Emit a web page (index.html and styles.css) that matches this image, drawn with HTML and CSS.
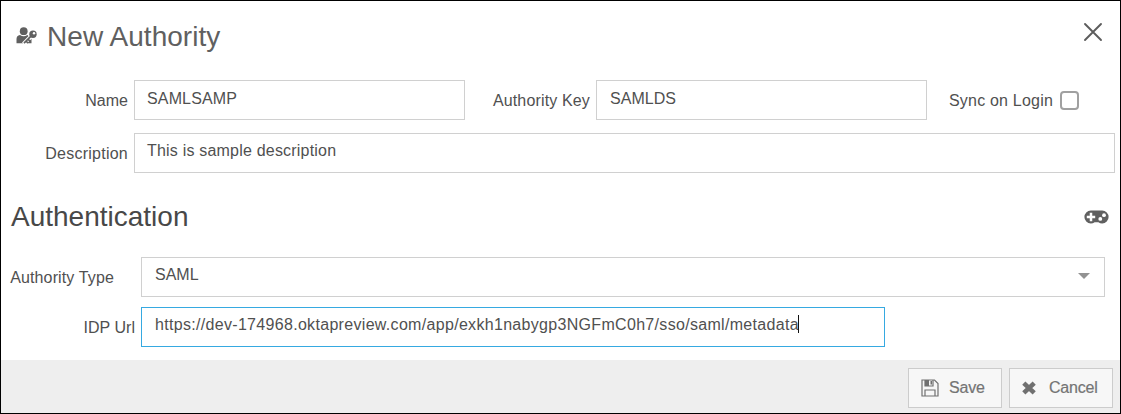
FILE: index.html
```html
<!DOCTYPE html>
<html lang="en">
<head>
<meta charset="utf-8">
<title>New Authority</title>
<link rel="stylesheet" href="styles.css">
</head>
<body>
<main class="dialog">
  <header class="header">
    <svg class="user-icon" width="22" height="18" viewBox="0 0 22 18">
      <circle cx="7.7" cy="4.2" r="3.9"/>
      <path d="M.5 16.3V12Q.5 8.7 4 8.1Q7.7 10.5 11.3 8.1L15.5 11V16.3Z"/>
      <path class="key-halo" d="M7.5 17L15.5 9"/>
      <circle class="hole" cx="16.8" cy="7.2" r="4.6"/>
      <path class="key" d="M8 16.2L15.3 8.9M12.2 12.4l2.2 2.2M10.3 14.3l1.7 1.7"/>
      <circle cx="17" cy="7.2" r="3.7"/>
      <circle class="hole" cx="18" cy="6.2" r="1.2"/>
    </svg>
    <h1 class="title">New Authority</h1>
    <svg class="close" width="20" height="20" viewBox="0 0 20 20"><path d="M2 2L18 18M18 2L2 18"/></svg>
  </header>
  <section class="general">
    <div class="row">
      <label class="label">Name</label>
      <div class="field half name-field">SAMLSAMP</div>
      <label class="label key-label">Authority Key</label>
      <div class="field half key-field">SAMLDS</div>
      <label class="label sync">Sync on Login</label>
      <span class="checkbox"></span>
    </div>
    <div class="row">
      <label class="label description-label">Description</label>
      <div class="field wide">This is sample description</div>
    </div>
  </section>
  <div class="section-head">
    <h2 class="title section-title">Authentication</h2>
    <svg class="gamepad" width="25" height="14" viewBox="0 0 25 14">
      <path d="M6.8.5H18.2A6.4 6.5 0 0 1 18.2 13.5Q16 13.5 14.4 12.2H10.6Q9 13.5 6.8 13.5A6.4 6.5 0 0 1 6.8.5Z"/>
      <path class="cross" d="M2.8 7h8.4M7 2.8v8.4"/>
      <circle class="hole" cx="16.3" cy="8.9" r="1.9"/>
      <circle class="hole" cx="20" cy="5.2" r="1.9"/>
    </svg>
  </div>
  <section class="auth">
    <div class="row">
      <label class="label type-label">Authority Type</label>
      <div class="field select">SAML<i class="arrow"></i></div>
    </div>
    <div class="row">
      <label class="label idp-label">IDP Url</label>
      <div class="field url">https://dev-174968.oktapreview.com/app/exkh1nabygp3NGFmC0h7/sso/saml/metadata<i class="caret"></i></div>
    </div>
  </section>
  <footer class="footer">
    <button class="button save">
      <svg width="18" height="18" viewBox="0 0 18 18">
        <path class="outline" d="M1 1H13.5L17 4.5V17H1ZM4 17V11H14V17M4 1V7H12V1"/>
        <path d="M4 1h4v6H4zM9.5 2h1.5v3.5H9.5z"/>
      </svg><span>Save</span>
    </button>
    <button class="button cancel">
      <svg width="14" height="14" viewBox="0 0 14 14"><path class="thick" d="M1.8 2.1L12.2 11.9M12.2 2.1L1.8 11.9"/></svg><span>Cancel</span>
    </button>
  </footer>
</main>
</body>
</html>
```
FILE: styles.css
```css
* { box-sizing: border-box; }
body { margin: 0; font: 16px/20px "Liberation Sans", Arial, sans-serif; color: #505050; }
svg { display: block; flex: none; fill: #606060; }
.dialog { display: flex; flex-direction: column; width: 1121px; height: 414px; border: 1px solid #000; background: #fff; }
.header { display: flex; height: 79px; padding: 19px 17px 0 15px; }
.user-icon { margin-top: 7px; }
.key-halo { stroke: #fff; stroke-width: 4; }
.key { stroke: #606060; stroke-width: 1.7; }
.hole { fill: #fff; }
.title { margin: 0 0 0 9px; font-size: 28px; line-height: 34px; font-weight: 400; color: #606060; white-space: nowrap; letter-spacing: .05px; }
.close { margin: 2px 0 0 auto; fill: none; stroke: #5c5c5c; stroke-width: 1.9; stroke-linecap: round; }
.general, .auth { display: grid; }
.general { row-gap: 13px; }
.auth { row-gap: 10px; padding-top: 20px; }
.row { display: flex; height: 40px; }
.label { width: 127px; margin-right: 6px; padding-top: 11px; text-align: right; white-space: nowrap; letter-spacing: .03px; }
.field { height: 40px; padding: 8px 12px; border: 1px solid #d0d0d0; background: #fff; white-space: nowrap; }
.half { width: 331px; }
.name-field { letter-spacing: .15px; }
.key-field { padding-left: 13px; letter-spacing: .05px; }
.key-label { width: 125px; letter-spacing: .15px; }
.description-label { letter-spacing: .25px; }
.sync { width: 126px; margin-right: 7px; letter-spacing: .2px; }
.checkbox { width: 19px; height: 19px; margin-top: 11px; border: 2px solid #a0a0a0; border-radius: 4px; }
.wide { width: 981px; padding-top: 7px; letter-spacing: .2px; }
.section-head { display: flex; justify-content: space-between; height: 64px; padding: 27px 11px 0 1px; }
.section-title { color: #484848; letter-spacing: 0; }
.gamepad { margin-top: 10px; }
.cross { stroke: #fff; stroke-width: 2.5; }
.type-label { width: 113px; margin-right: 27px; letter-spacing: .13px; }
.idp-label { width: 134px; }
.select { display: flex; justify-content: space-between; width: 964px; padding: 7px 12px 7px 13px; }
.arrow { width: 0; height: 0; margin: 8px 2px 0 0; border: 6px solid transparent; border-top-color: #929292; border-bottom: 0; }
.url { display: flex; width: 744px; padding: 7px 12px 7px 13px; border-color: #36a9e1; letter-spacing: .312px; }
.caret { width: 1px; height: 18px; margin-left: -1px; background: #111; }
.footer { display: flex; justify-content: flex-end; gap: 7px; height: 53px; margin-top: auto; padding: 8px 7px 5px; background: #eee; }
.button { display: flex; align-items: center; height: 40px; padding: 0; border: 1px solid #ccc; background: #f7f7f7; color: #747474; font: inherit; letter-spacing: -.2px; -webkit-text-stroke: .2px #747474; }
.button svg { fill: #707070; }
.save { width: 94px; padding-left: 12px; gap: 10px; }
.cancel { width: 104px; padding-left: 12px; gap: 13px; }
.outline { fill: none; stroke: #707070; stroke-width: 1.2; }
.button .thick { stroke: #707070; stroke-width: 4.6; }
```
